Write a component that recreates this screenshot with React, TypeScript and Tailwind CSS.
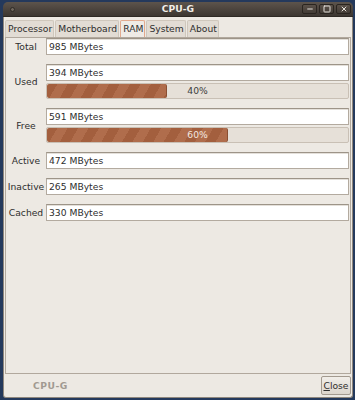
import { X, Minus, Square } from 'lucide-react';

const font = "font-['DejaVu_Sans',sans-serif]";

function Field({ value }: { value: string }) {
    return (
        <div className="h-[17px] bg-white border border-[#b3aa9f] border-t-[#9d9488] flex items-center pl-[2px] text-[9.2px] text-[#2e2e2e] shadow-[inset_0_1px_0_#e4e0da]">
            {value}
        </div>
    );
}

function Bar({ pct, light }: { pct: number; light?: boolean }) {
    return (
        <div className="relative h-[16px] bg-[#e6e0d8] border border-[#c9c0b5] rounded-[2px] overflow-hidden">
            <div
                className="h-full rounded-[2px] border-r border-[#8a4f32] bg-[repeating-linear-gradient(120deg,#a35f3e_0px,#a35f3e_9px,#b06d4c_9px,#b06d4c_18px)]"
                style={{ width: `${pct}%` }}
            />
            <span className={`absolute inset-0 flex items-center justify-center text-[9.2px] ${light ? 'text-[#f3e8e0]' : 'text-[#3c3c3c]'}`}>
                {pct}%
            </span>
        </div>
    );
}

function Row({ label, children }: { label: string; children: React.ReactNode }) {
    return (
        <div className="flex items-center">
            <div className="w-[40px] shrink-0 text-center text-[9.2px] text-[#2e2e2e]">{label}</div>
            <div className="flex-1 flex flex-col gap-[2px]">{children}</div>
        </div>
    );
}

const tabs = ['Processor', 'Motherboard', 'RAM', 'System', 'About'];

export default function App() {
    return (
        <div className={`w-[355px] h-[400px] bg-[#24395c] pt-[2px] pl-[3px] ${font}`}>
            <div className="w-[350px] h-[396px] flex flex-col rounded-t-[5px] overflow-hidden">
                {/* title bar */}
                <div className="h-[15px] shrink-0 relative flex items-center justify-center bg-gradient-to-b from-[#5d544c] to-[#3c3631] border-b border-[#2e2924]">
                    <div className="absolute left-[7px] top-[5px] w-[5px] h-[5px] rounded-full bg-[#6e655c] border border-[#2f2a26]" />
                    <span className="text-[9.2px] font-bold text-[#f2efe9]">CPU-G</span>
                    <div className="absolute right-[2px] top-[2px] flex gap-[2px]">
                        {[Minus, Square, X].map((Icon, i) => (
                            <div key={i} className="w-[15px] h-[10px] rounded-[2px] border border-[#2a2520] bg-gradient-to-b from-[#5a5149] to-[#433c36] flex items-center justify-center">
                                <Icon className="w-[8px] h-[8px] text-[#e6e2dc]" strokeWidth={3} />
                            </div>
                        ))}
                    </div>
                </div>

                {/* body */}
                <div className="flex-1 flex flex-col bg-[#ede9e3] border-x border-b border-[#8f877d] rounded-b-[3px]">
                    {/* tabs */}
                    <div className="h-[20px] shrink-0 flex items-end gap-[1px] pl-[1px]">
                        {tabs.map((t) => (
                            <div
                                key={t}
                                className={`h-[17px] flex items-center pl-[2px] pr-[1px] text-[9.2px] text-[#2e2e2e] rounded-t-[2px] border border-b-0 ${
                                    t === 'RAM'
                                        ? 'bg-[#efebe6] border-[#e2aa8e]'
                                        : 'bg-[#e2dcd4] border-[#cfc7bc]'
                                }`}
                            >
                                {t}
                            </div>
                        ))}
                    </div>

                    {/* notebook page */}
                    <div className="mx-[1px] h-[337px] shrink-0 border border-[#b1a89d] bg-[#ede9e3] pr-[1px] flex flex-col gap-[9px]">
                        <Row label="Total">
                            <Field value="985 MBytes" />
                        </Row>
                        <Row label="Used">
                            <Field value="394 MBytes" />
                            <Bar pct={40} />
                        </Row>
                        <Row label="Free">
                            <Field value="591 MBytes" />
                            <Bar pct={60} light />
                        </Row>
                        <Row label="Active">
                            <Field value="472 MBytes" />
                        </Row>
                        <Row label="Inactive">
                            <Field value="265 MBytes" />
                        </Row>
                        <Row label="Cached">
                            <Field value="330 MBytes" />
                        </Row>
                    </div>

                    {/* footer */}
                    <div className="flex-1 flex items-center justify-between pl-[29px] pr-[1px]">
                        <span className="text-[9.2px] font-bold text-[#a19a91] tracking-[0.5px]">CPU-G</span>
                        <button className="w-[30px] h-[19px] rounded-[2px] border border-[#a39a8f] bg-gradient-to-b from-[#f1eee9] to-[#ddd6cd] text-[9.2px] text-[#2e2e2e] flex items-center justify-center">
                            <span><span className="underline">C</span>lose</span>
                        </button>
                    </div>
                </div>
            </div>
        </div>
    );
}
